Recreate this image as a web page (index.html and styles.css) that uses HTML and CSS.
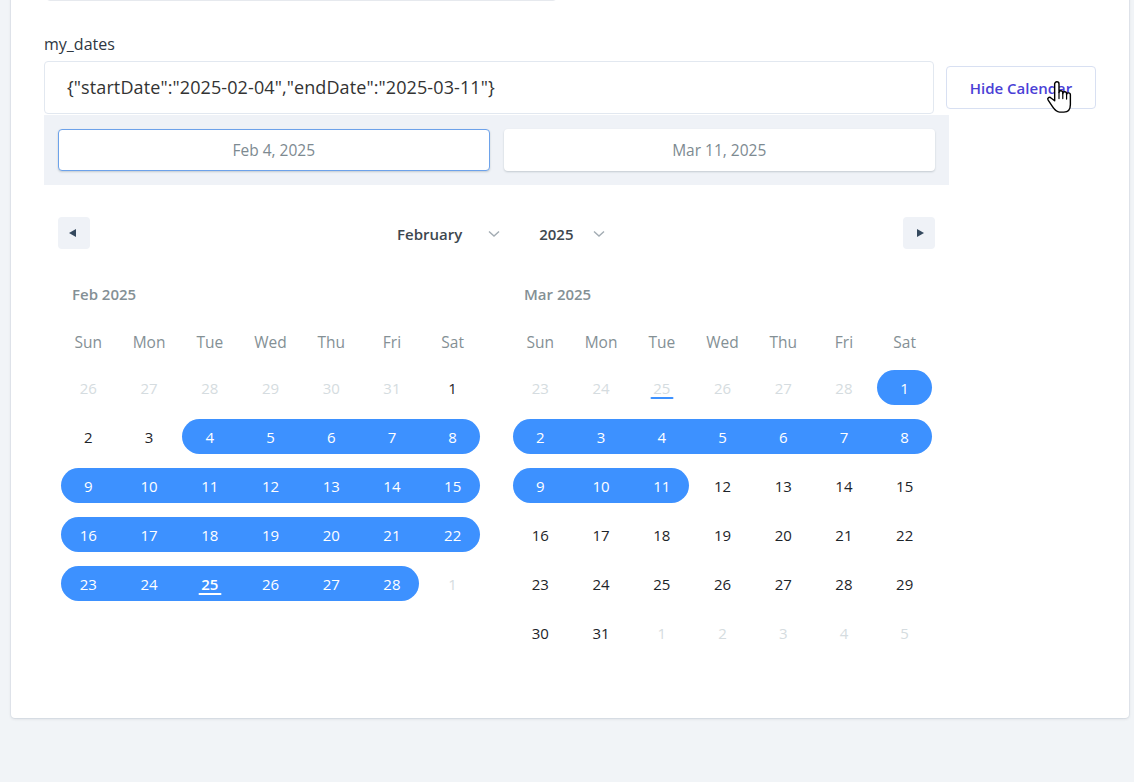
FILE: index.html
```html
<!DOCTYPE html>
<html lang="en">
<head>
<meta charset="utf-8">
<title>my_dates</title>
<link rel="stylesheet" href="styles.css">
</head>
<body>
<div class="card">
  <div class="prev-field"></div>
  <label class="label">my_dates</label>
  <div class="field-row">
    <div class="text-input">{"startDate":"2025-02-04","endDate":"2025-03-11"}</div>
    <button class="toggle">Hide Calendar</button>
    <svg class="cursor" width="26" height="36" viewBox="0 0 24 32">
      <path d="M8,14 V3 a2,2 0 0 1 4,0 V11 a1.75,1.75 0 0 1 3.5,0 V12 a1.75,1.75 0 0 1 3.5,0 V13 a1.75,1.75 0 0 1 3.5,0 V22 c0,4 -2,7 -6,7 h-4 c-3,0 -4.5,-2 -6.5,-5 l-4,-6 a1.6,1.6 0 0 1 2.6,-2 L8,18.5 Z" fill="#fff" stroke="#000" stroke-width="1.3" stroke-linejoin="round"/>
      <path d="M12,11 v5.5 M15.5,12 v4.5 M19,13 v4" stroke="#000" stroke-width="1.1" fill="none" stroke-linecap="round"/>
    </svg>
  </div>
  <div class="picker">
    <div class="display">
      <div class="display-item active">Feb 4, 2025</div>
      <div class="display-item">Mar 11, 2025</div>
    </div>
    <div class="nav">
      <button class="nav-btn"><span class="tri-left"></span></button>
      <div class="pickers">
        <span class="select">February<svg class="chev" width="12" height="8" viewBox="0 0 12 8"><path d="M1 1.5 L6 6 L11 1.5" fill="none" stroke="#a3acb3" stroke-width="1.4"/></svg></span>
        <span class="select year">2025<svg class="chev chev-year" width="12" height="8" viewBox="0 0 12 8"><path d="M1 1.5 L6 6 L11 1.5" fill="none" stroke="#a3acb3" stroke-width="1.4"/></svg></span>
      </div>
      <button class="nav-btn next"><span class="tri-right"></span></button>
    </div>
    <div class="months">
      <div class="month">
        <div class="month-name">Feb 2025</div>
        <div class="weekdays"><span>Sun</span><span>Mon</span><span>Tue</span><span>Wed</span><span>Thu</span><span>Fri</span><span>Sat</span></div>
        <div class="days">
          <div class="layer">
            <div class="pill" style="grid-row:2;grid-column:3/8"></div>
            <div class="pill" style="grid-row:3;grid-column:1/8"></div>
            <div class="pill" style="grid-row:4;grid-column:1/8"></div>
            <div class="pill" style="grid-row:5;grid-column:1/7"></div>
          </div>
          <div class="layer">
            <div class="day passive"><span>26</span></div><div class="day passive"><span>27</span></div><div class="day passive"><span>28</span></div><div class="day passive"><span>29</span></div><div class="day passive"><span>30</span></div><div class="day passive"><span>31</span></div><div class="day"><span>1</span></div>
            <div class="day"><span>2</span></div><div class="day"><span>3</span></div><div class="day sel"><span>4</span></div><div class="day sel"><span>5</span></div><div class="day sel"><span>6</span></div><div class="day sel"><span>7</span></div><div class="day sel"><span>8</span></div>
            <div class="day sel"><span>9</span></div><div class="day sel"><span>10</span></div><div class="day sel"><span>11</span></div><div class="day sel"><span>12</span></div><div class="day sel"><span>13</span></div><div class="day sel"><span>14</span></div><div class="day sel"><span>15</span></div>
            <div class="day sel"><span>16</span></div><div class="day sel"><span>17</span></div><div class="day sel"><span>18</span></div><div class="day sel"><span>19</span></div><div class="day sel"><span>20</span></div><div class="day sel"><span>21</span></div><div class="day sel"><span>22</span></div>
            <div class="day sel"><span>23</span></div><div class="day sel"><span>24</span></div><div class="day sel today"><span>25</span></div><div class="day sel"><span>26</span></div><div class="day sel"><span>27</span></div><div class="day sel"><span>28</span></div><div class="day passive"><span>1</span></div>
          </div>
        </div>
      </div>
      <div class="month">
        <div class="month-name">Mar 2025</div>
        <div class="weekdays"><span>Sun</span><span>Mon</span><span>Tue</span><span>Wed</span><span>Thu</span><span>Fri</span><span>Sat</span></div>
        <div class="days">
          <div class="layer">
            <div class="pill" style="grid-row:1;grid-column:7/8"></div>
            <div class="pill" style="grid-row:2;grid-column:1/8"></div>
            <div class="pill" style="grid-row:3;grid-column:1/4"></div>
          </div>
          <div class="layer">
            <div class="day passive"><span>23</span></div><div class="day passive"><span>24</span></div><div class="day passive today"><span>25</span></div><div class="day passive"><span>26</span></div><div class="day passive"><span>27</span></div><div class="day passive"><span>28</span></div><div class="day sel"><span>1</span></div>
            <div class="day sel"><span>2</span></div><div class="day sel"><span>3</span></div><div class="day sel"><span>4</span></div><div class="day sel"><span>5</span></div><div class="day sel"><span>6</span></div><div class="day sel"><span>7</span></div><div class="day sel"><span>8</span></div>
            <div class="day sel"><span>9</span></div><div class="day sel"><span>10</span></div><div class="day sel"><span>11</span></div><div class="day"><span>12</span></div><div class="day"><span>13</span></div><div class="day"><span>14</span></div><div class="day"><span>15</span></div>
            <div class="day"><span>16</span></div><div class="day"><span>17</span></div><div class="day"><span>18</span></div><div class="day"><span>19</span></div><div class="day"><span>20</span></div><div class="day"><span>21</span></div><div class="day"><span>22</span></div>
            <div class="day"><span>23</span></div><div class="day"><span>24</span></div><div class="day"><span>25</span></div><div class="day"><span>26</span></div><div class="day"><span>27</span></div><div class="day"><span>28</span></div><div class="day"><span>29</span></div>
            <div class="day"><span>30</span></div><div class="day"><span>31</span></div><div class="day passive"><span>1</span></div><div class="day passive"><span>2</span></div><div class="day passive"><span>3</span></div><div class="day passive"><span>4</span></div><div class="day passive"><span>5</span></div>
          </div>
        </div>
      </div>
    </div>
  </div>
</div>
</body>
</html>
```
FILE: styles.css
```css
html, body {
  margin: 0;
  height: 782px;
  overflow: hidden;
}
body {
  background: #f1f4f7;
  font-family: "Open Sans", "Noto Sans", "Liberation Sans", sans-serif;
}
.card {
  box-sizing: border-box;
  width: 1118px;
  height: 748px;
  margin: -30px 0 0 11px;
  padding: 0 33px;
  background: #fff;
  border-radius: 4px;
  box-shadow: 0 1px 3px rgba(30, 41, 59, 0.12), 0 0 0 1px rgba(226, 232, 240, 0.7);
}
.prev-field {
  box-sizing: border-box;
  width: 511px;
  height: 31px;
  margin-left: 2px;
  border: 1px solid #e6e9ee;
  border-radius: 4px;
}
.label {
  display: block;
  margin-top: 33px;
  font-size: 16px;
  line-height: 20px;
  font-weight: 500;
  color: #2f3742;
}
.field-row {
  position: relative;
  display: flex;
  align-items: center;
  margin-top: 7px;
}
.text-input {
  box-sizing: border-box;
  width: 890px;
  height: 53px;
  padding: 0 22px;
  border: 1px solid #e2e8f0;
  border-radius: 4px;
  font-size: 18px;
  letter-spacing: 0.1px;
  line-height: 51px;
  color: #333;
}
.toggle {
  box-sizing: border-box;
  width: 150px;
  height: 43px;
  margin-left: 12px;
  border: 1px solid #d8e0f2;
  border-radius: 4px;
  background: #fff;
  color: #4a3fd6;
  font-family: inherit;
  font-size: 15px;
  font-weight: 600;
  padding: 0;
}
.cursor {
  position: absolute;
  left: 1002px;
  top: 19px;
}
.picker {
  width: 905px;
  margin-top: 1px;
}
.display {
  display: flex;
  gap: 14px;
  padding: 14px;
  background: #eff2f7;
}
.display-item {
  box-sizing: border-box;
  flex: 1;
  height: 42px;
  border: 1px solid transparent;
  border-radius: 4px;
  background: #fff;
  box-shadow: 0 1px 2px rgba(35, 57, 66, 0.21);
  font-size: 15.5px;
  line-height: 40px;
  text-align: center;
  color: #7d8a91;
}
.display-item.active {
  border-color: #6da2ea;
}
.nav {
  display: flex;
  align-items: center;
  padding: 32px 14px 0;
}
.nav-btn {
  display: flex;
  align-items: center;
  justify-content: center;
  width: 32px;
  height: 32px;
  padding: 0;
  border: 0;
  border-radius: 4px;
  background: #eff2f7;
}
.nav-btn.next {
  margin-left: auto;
}
.tri-left {
  width: 0;
  height: 0;
  border-style: solid;
  border-width: 4.5px 7px 4.5px 0;
  border-color: transparent #34495e transparent transparent;
  margin-left: -3px;
}
.tri-right {
  width: 0;
  height: 0;
  border-style: solid;
  border-width: 4.5px 0 4.5px 7px;
  border-color: transparent transparent transparent #34495e;
  margin-left: 3px;
}
.pickers {
  display: flex;
  align-items: center;
  margin-left: 307px;
  padding-top: 2px;
}
.select {
  display: flex;
  align-items: center;
  font-size: 15px;
  font-weight: 600;
  line-height: 20px;
  color: #3e484f;
}
.chev {
  margin-left: 26px;
}
.select.year {
  margin-left: 39px;
}
.chev-year {
  margin-left: 19px;
}
.months {
  display: flex;
  gap: 27px;
  padding: 35px 14px 0;
}
.month {
  width: 425px;
}
.month-name {
  padding-left: 14px;
  font-size: 15px;
  font-weight: 600;
  line-height: 20px;
  color: #849095;
}
.weekdays {
  display: grid;
  grid-template-columns: repeat(7, 1fr);
  align-items: center;
  height: 42px;
  margin-top: 17px;
  font-size: 15.5px;
  color: #849095;
  text-align: center;
}
.days {
  display: grid;
}
.layer {
  grid-area: 1 / 1;
  display: grid;
  grid-template-columns: repeat(7, 1fr);
  grid-template-rows: repeat(6, 49px);
}
.pill {
  margin: 7px 3px;
  border-radius: 18px;
  background: #3d91ff;
}
.day {
  display: flex;
  align-items: center;
  justify-content: center;
  font-size: 15px;
  color: #1d2429;
}
.day span {
  position: relative;
  line-height: 20px;
}
.day.passive {
  color: #d5dce0;
}
.day.sel {
  color: #fff;
}
.day.today span::after {
  content: "";
  position: absolute;
  left: 50%;
  bottom: -1px;
  width: 23px;
  height: 2px;
  border-radius: 2px;
  transform: translateX(-50%);
  background: #3d91ff;
}
.day.sel.today span {
  font-weight: 600;
}
.day.sel.today span::after {
  background: #fff;
}
```
